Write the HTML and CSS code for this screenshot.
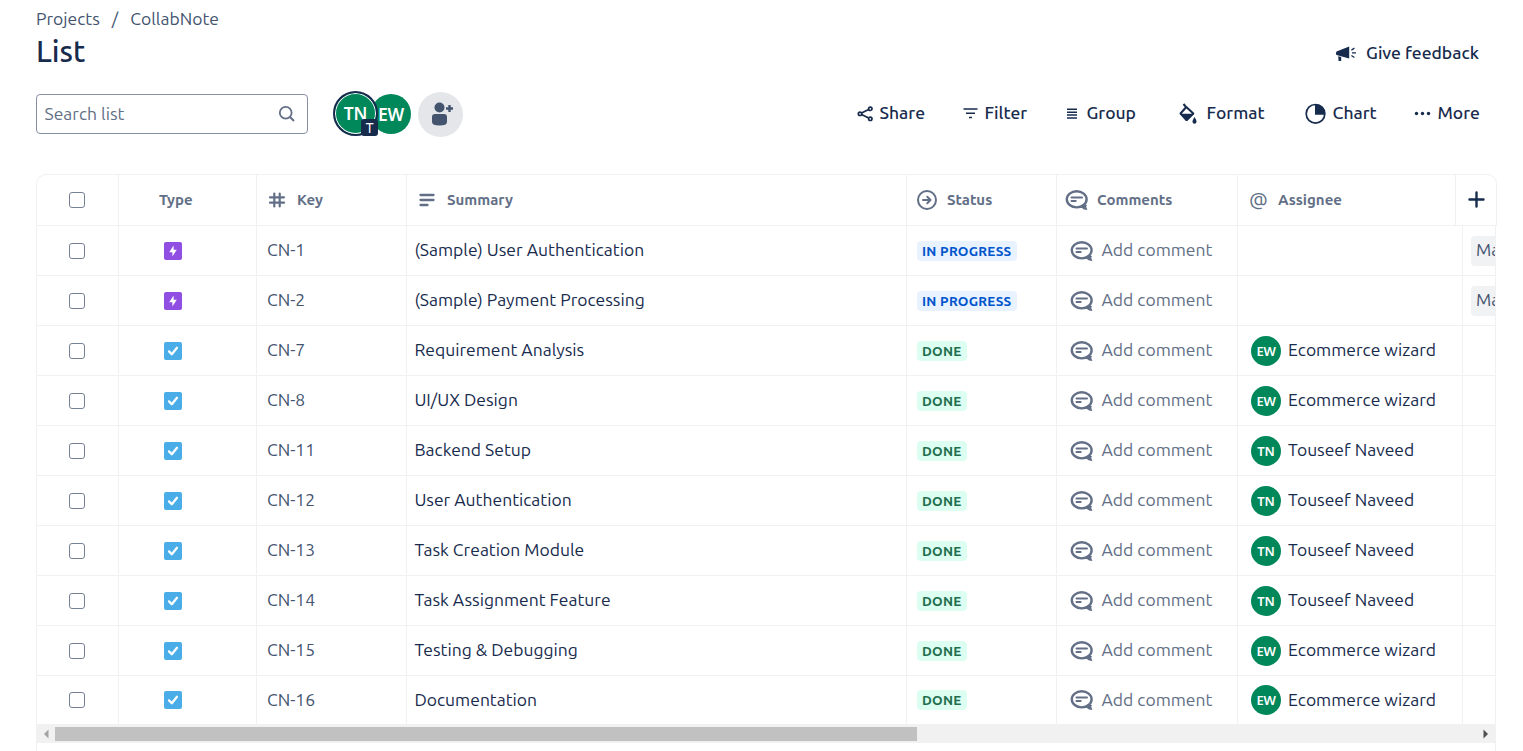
FILE: index.html
```html
<!DOCTYPE html>
<html lang="en">
<head>
<meta charset="utf-8">
<title>List - CollabNote</title>
<link rel="stylesheet" href="styles.css">
</head>
<body>
<svg class="defs" aria-hidden="true">
  <symbol id="bubble" viewBox="0 0 24 22"><ellipse cx="11.700" cy="10.300" rx="9.900" ry="8.100" fill="none" stroke="currentColor" stroke-width="2.400"/><path d="M14.500 18l3-2.500 4.500.5-.8 1.800 1.200 3.200q-4 0-5.500-2z" fill="currentColor"/><path d="M6.500 8.500h10.500M6.500 12h4.200" stroke="currentColor" stroke-width="2" stroke-linecap="round"/></symbol>
  <symbol id="epic" viewBox="0 0 18 18"><rect width="18" height="18" rx="2" fill="#904ee2"/><path d="M9.600 3.600v4.200h3.200l-4.400 6.600v-4.200H5.200z" fill="#fff"/></symbol>
  <symbol id="task" viewBox="0 0 18 18"><rect width="18" height="18" rx="2" fill="#4bade8"/><path d="M5 9.400l2.800 2.800L13 5.800" fill="none" stroke="#fff" stroke-width="2.300" stroke-linecap="round" stroke-linejoin="round"/></symbol>
</svg>
<nav class="crumbs"><span>Projects</span><span class="slash">/</span><span>CollabNote</span></nav>
<header class="title-row">
  <h1>List</h1>
  <button class="feedback"><svg width="22" height="18" viewBox="0 0 22 18"><path d="M14.200 2.500v12L1.500 11Q.2 9.500 1.500 7.400zM3.200 12.300l3 .8v3.800H3.600z" fill="currentColor"/><path d="M16.400 6.100l3-2M17 8.800h4M16.400 11.500l3 2" stroke="currentColor" stroke-width="1.300"/></svg><span>Give feedback</span></button>
</header>
<section class="toolbar">
  <div class="search"><span>Search list</span><svg width="18" height="18" viewBox="0 0 18 18"><circle cx="7.700" cy="7.700" r="5.900" fill="none" stroke="currentColor" stroke-width="1.800"/><path d="M12 12l4 4" stroke="currentColor" stroke-width="2"/></svg></div>
  <div class="people">
    <div class="avatar big selected"><span>TN</span><i class="badge">T</i></div>
    <div class="avatar big second">EW</div>
    <div class="add-person"><svg width="24" height="26" viewBox="0 0 24 26"><circle cx="9.500" cy="6.500" r="5" fill="currentColor"/><path d="M2 16q0-3 3-3h9q3 0 3 3v5q0 3.500-7.500 3.500T2 21z" fill="currentColor"/><path d="M19.500 4v7M16 7.500h7" stroke="currentColor" stroke-width="2.400"/></svg></div>
  </div>
  <div class="actions">
    <button class="a-share"><svg width="17" height="17" viewBox="0 0 17 17" fill="none" stroke="currentColor" stroke-width="1.700"><circle cx="3" cy="8.800" r="1.700"/><circle cx="13.300" cy="3.800" r="1.700"/><circle cx="13.300" cy="13.800" r="1.700"/><path d="M4.600 8l7-3.500M4.600 9.600l7 3.500"/></svg><span>Share</span></button>
    <button class="a-filter"><svg width="15" height="12" viewBox="0 0 15 12" stroke="currentColor" stroke-width="1.600"><path d="M.5 2h14M3 6.300h9M6 10.500h3"/></svg><span>Filter</span></button>
    <button class="a-group"><svg width="12" height="12" viewBox="0 0 12 12" stroke="currentColor" stroke-width="1.400"><path d="M1 2.200h10M1 5.200h10M1 8h10M1 11h10"/></svg><span>Group</span></button>
    <button class="a-format"><svg width="20" height="24" viewBox="0 0 20 24"><path d="M5.500 3l2.500 3M8.300 6L2.500 12.500 8.600 19l6.700-6.500z" fill="none" stroke="currentColor" stroke-width="2" stroke-linejoin="round"/><path d="M2 12.700h14L9.600 19.500q-1 .8-2 0z" fill="currentColor"/><path d="M16.500 16q2 3 2 4.700a2 2 0 0 1-4 0q0-1.700 2-4.700" fill="currentColor"/></svg><span>Format</span></button>
    <button class="a-chart"><svg width="21" height="21" viewBox="0 0 21 21"><circle cx="10.500" cy="10.800" r="9.300" fill="none" stroke="currentColor" stroke-width="1.700"/><path d="M10 1v10.700h10a9.600 9.600 0 0 0-10-10.700" fill="currentColor"/></svg><span>Chart</span></button>
    <button class="a-more"><svg width="17" height="6" viewBox="0 0 17 6" fill="currentColor"><circle cx="2.500" cy="3.500" r="1.700"/><circle cx="8.500" cy="3.500" r="1.700"/><circle cx="14.500" cy="3.500" r="1.700"/></svg><span>More</span></button>
  </div>
</section>
<main class="table">
  <div class="row head">
    <div class="check"><i></i></div>
    <div class="type"><span>Type</span></div>
    <div class="hkey"><svg width="18" height="18" viewBox="0 0 18 18" stroke="currentColor" stroke-width="2.200" stroke-linecap="round"><path d="M6.300 2.500v13M11.700 2.500v13M2 6.300h14M2 11.700h14"/></svg><span>Key</span></div>
    <div class="hsum"><svg width="18" height="18" viewBox="0 0 18 18" stroke="currentColor" stroke-width="2.300" stroke-linecap="round"><path d="M2.500 4h13M2.500 9h13M2.500 14h7"/></svg><span>Summary</span></div>
    <div class="hstat"><svg width="20" height="20" viewBox="0 0 20 20" fill="none" stroke="currentColor" stroke-width="2"><circle cx="10" cy="10" r="9"/><path d="M6 10h7M10.300 6.800L13.500 10l-3.200 3.200" stroke-linecap="round" stroke-linejoin="round"/></svg><span>Status</span></div>
    <div class="hcom"><svg width="24" height="22"><use href="#bubble"/></svg><span>Comments</span></div>
    <div class="hasg"><b class="at">@</b><span>Assignee</span></div>
    <div class="plus"><svg width="17" height="17" viewBox="0 0 17 17"><path d="M8.500 1.500v14M1.500 8.500h14" stroke="currentColor" stroke-width="2.400" stroke-linecap="round"/></svg></div>
  </div>
  <div class="body">
    <div class="row"><div class="check"><i></i></div><div class="type"><svg width="18" height="18"><use href="#epic"/></svg></div><div class="key"><span>CN-1</span></div><div class="sum"><span>(Sample) User Authentication</span></div><div class="stat"><span class="loz prog">IN PROGRESS</span></div><div class="com"><svg width="24" height="22"><use href="#bubble"/></svg><span>Add comment</span></div><div class="asg"></div><div class="tag"><span>Ma</span></div></div>
    <div class="row"><div class="check"><i></i></div><div class="type"><svg width="18" height="18"><use href="#epic"/></svg></div><div class="key"><span>CN-2</span></div><div class="sum"><span>(Sample) Payment Processing</span></div><div class="stat"><span class="loz prog">IN PROGRESS</span></div><div class="com"><svg width="24" height="22"><use href="#bubble"/></svg><span>Add comment</span></div><div class="asg"></div><div class="tag"><span>Ma</span></div></div>
    <div class="row"><div class="check"><i></i></div><div class="type"><svg width="18" height="18"><use href="#task"/></svg></div><div class="key"><span>CN-7</span></div><div class="sum"><span>Requirement Analysis</span></div><div class="stat"><span class="loz done">DONE</span></div><div class="com"><svg width="24" height="22"><use href="#bubble"/></svg><span>Add comment</span></div><div class="asg"><b class="avatar">EW</b><span>Ecommerce wizard</span></div><div class="tag"></div></div>
    <div class="row"><div class="check"><i></i></div><div class="type"><svg width="18" height="18"><use href="#task"/></svg></div><div class="key"><span>CN-8</span></div><div class="sum"><span>UI/UX Design</span></div><div class="stat"><span class="loz done">DONE</span></div><div class="com"><svg width="24" height="22"><use href="#bubble"/></svg><span>Add comment</span></div><div class="asg"><b class="avatar">EW</b><span>Ecommerce wizard</span></div><div class="tag"></div></div>
    <div class="row"><div class="check"><i></i></div><div class="type"><svg width="18" height="18"><use href="#task"/></svg></div><div class="key"><span>CN-11</span></div><div class="sum"><span>Backend Setup</span></div><div class="stat"><span class="loz done">DONE</span></div><div class="com"><svg width="24" height="22"><use href="#bubble"/></svg><span>Add comment</span></div><div class="asg"><b class="avatar">TN</b><span>Touseef Naveed</span></div><div class="tag"></div></div>
    <div class="row"><div class="check"><i></i></div><div class="type"><svg width="18" height="18"><use href="#task"/></svg></div><div class="key"><span>CN-12</span></div><div class="sum"><span>User Authentication</span></div><div class="stat"><span class="loz done">DONE</span></div><div class="com"><svg width="24" height="22"><use href="#bubble"/></svg><span>Add comment</span></div><div class="asg"><b class="avatar">TN</b><span>Touseef Naveed</span></div><div class="tag"></div></div>
    <div class="row"><div class="check"><i></i></div><div class="type"><svg width="18" height="18"><use href="#task"/></svg></div><div class="key"><span>CN-13</span></div><div class="sum"><span>Task Creation Module</span></div><div class="stat"><span class="loz done">DONE</span></div><div class="com"><svg width="24" height="22"><use href="#bubble"/></svg><span>Add comment</span></div><div class="asg"><b class="avatar">TN</b><span>Touseef Naveed</span></div><div class="tag"></div></div>
    <div class="row"><div class="check"><i></i></div><div class="type"><svg width="18" height="18"><use href="#task"/></svg></div><div class="key"><span>CN-14</span></div><div class="sum"><span>Task Assignment Feature</span></div><div class="stat"><span class="loz done">DONE</span></div><div class="com"><svg width="24" height="22"><use href="#bubble"/></svg><span>Add comment</span></div><div class="asg"><b class="avatar">TN</b><span>Touseef Naveed</span></div><div class="tag"></div></div>
    <div class="row"><div class="check"><i></i></div><div class="type"><svg width="18" height="18"><use href="#task"/></svg></div><div class="key"><span>CN-15</span></div><div class="sum"><span>Testing &amp; Debugging</span></div><div class="stat"><span class="loz done">DONE</span></div><div class="com"><svg width="24" height="22"><use href="#bubble"/></svg><span>Add comment</span></div><div class="asg"><b class="avatar">EW</b><span>Ecommerce wizard</span></div><div class="tag"></div></div>
    <div class="row last"><div class="check"><i></i></div><div class="type"><svg width="18" height="18"><use href="#task"/></svg></div><div class="key"><span>CN-16</span></div><div class="sum"><span>Documentation</span></div><div class="stat"><span class="loz done">DONE</span></div><div class="com"><svg width="24" height="22"><use href="#bubble"/></svg><span>Add comment</span></div><div class="asg"><b class="avatar">EW</b><span>Ecommerce wizard</span></div><div class="tag"></div></div>
    <div class="scrollbar"><svg width="18" height="18" viewBox="0 0 18 18"><path d="M11.500 4.500v9L7 9z" fill="#a3a3a3"/></svg><div class="thumb"></div><svg width="18" height="18" viewBox="0 0 18 18"><path d="M6.500 4.500v9L11 9z" fill="#505050"/></svg></div>
    <div class="below"></div>
  </div>
</main>
</body>
</html>
```
FILE: styles.css
```css
* { box-sizing: border-box; }
html, body { height: 100%; overflow: hidden; }
body { margin: 0; background: #fff; color: #172b4d; font: 400 17.500px/24px Ubuntu, "Open Sans", "Noto Sans", sans-serif; white-space: nowrap; }
svg { display: block; flex: none; }
.defs { position: absolute; width: 0; height: 0; }
button { display: flex; align-items: center; border: 0; padding: 0; background: none; color: #172b4d; font: inherit; font-weight: 500; height: 24px; }
.crumbs { display: flex; padding: 7px 0 0 36px; height: 31px; color: #44546f; }
.slash { margin: 0 12px; }
.title-row { display: flex; justify-content: space-between; padding: 0 44px 0 36px; height: 50px; }
h1 { margin: 4px 0 0; font-size: 30px; line-height: 32px; font-weight: 500; }
.feedback { margin-top: 10px; gap: 9px; }
.toolbar { display: flex; height: 93px; padding: 13px 44px 0 36px; align-items: flex-start; }
.search { display: flex; align-items: center; justify-content: space-between; width: 272px; height: 40px; border: 1px solid #8590a2; border-radius: 4px; padding: 0 11px 0 7.500px; color: #626f86; }
.people { display: flex; margin: -3px 0 0 25px; }
.avatar { display: flex; align-items: center; justify-content: center; flex: none; width: 30px; height: 30px; border-radius: 50%; background: #00875a; color: #fff; font: 600 13px/20px "Noto Sans", "Open Sans", sans-serif; letter-spacing: -.200px; }
.avatar.big { width: 40px; height: 40px; padding-bottom: 1px; font-size: 17.500px; margin-top: 3px; }
.avatar.big.selected { position: relative; z-index: 1; width: 45px; height: 45px; padding-bottom: 1px; border: 2px solid #172b4d; box-shadow: inset 0 0 0 1px #fff; margin: 0; }
.avatar.second { margin-left: -7px; }
.badge { position: absolute; right: -2px; bottom: -2px; width: 17px; height: 17px; border-radius: 3px; background: #172b4d; font: 400 14px/17px "Noto Sans", sans-serif; text-align: center; }
.add-person { display: flex; align-items: center; justify-content: center; width: 45px; height: 45px; margin: 1px 0 0 7px; border-radius: 50%; background: #e4e6ea; color: #44546f; }
.add-person svg { margin: 0 -2px 2px 0; }
.actions { display: flex; flex: 1; justify-content: flex-end; margin-top: 7px; }
.actions svg { margin-right: 7px; }
.actions button { justify-content: flex-start; }
.a-share { width: 106px; }
.a-filter { width: 103px; }
.a-group { width: 112px; }
.a-format { width: 127px; }
.a-chart { width: 109px; }
.a-more { width: 65.500px; }
.a-share svg { margin-right: 6px; }
.a-group svg, .a-format svg { margin-right: 9px; }
.row { display: grid; grid-template-columns: 82px 138px 150px 500px 150px 181px 225px 1fr; height: 50px; border-bottom: 1px solid #f0f1f2; }
.row > div { display: flex; align-items: center; border-right: 1px solid #f0f1f2; min-width: 0; overflow: hidden; }
.row > div:last-child { border-right: 0; }
.table { padding-left: 36px; }
.head { width: 1461px; height: 52px; border: 1px solid #f0f1f2; border-radius: 10px 10px 0 0; grid-template-columns: 82px 138px 150px 500px 150px 181px 218px 1fr; color: #626f86; font-size: 15px; font-weight: 600; }
.body { width: 1460px; border: solid #f0f1f2; border-width: 0 1px; }
.check { justify-content: center; }
.check i { width: 16px; height: 16px; margin-right: 1px; border: 1px solid #758195; border-radius: 3px; }
.type { padding-left: 45px; }
.head .type { padding-left: 40px; }
.key { padding-left: 10px; color: #44546f; }
.sum { padding-left: 7.400px; }
.key span, .sum span, .com span, .asg span { margin-bottom: 2px; }
.stat { padding-left: 10px; }
.com { padding-left: 13px; color: #626f86; }
.com span { margin-left: 7.500px; }
.asg { padding-left: 13px; }
.asg span { margin-left: 7px; }
.tag { padding-left: 8px; }
.tag span { height: 30px; padding: 2px 5px; border-radius: 4px; background: #f1f2f4; color: #44546f; }
.hkey { padding-left: 11px; } .hkey span { margin-left: 11px; }
.hsum { padding-left: 11px; } .hsum span { margin-left: 11px; }
.hstat { padding-left: 10px; } .hstat span { margin-left: 10px; }
.hcom { padding-left: 8px; } .hcom span { margin-left: 8px; }
.hasg { padding-left: 11px; } .hasg span { margin-left: 10px; }
.at { font-size: 20px; font-weight: 400; width: 19px; }
.plus { justify-content: center; color: #172b4d; }
.plus svg { margin-bottom: 2px; }
.loz { height: 20px; line-height: 20px; padding: 0 5px; border-radius: 4px; font-size: 13.500px; font-weight: 700; letter-spacing: .25px; }
.prog { width: 100px; background: #e9f2ff; color: #0055cc; }
.done { width: 50px; background: #dcfff1; color: #216e4e; }
.row.last { height: 48px; border-bottom: 0; }
.row.last .key span, .row.last .sum span, .row.last .com span, .row.last .asg span { margin-bottom: 1px; }
.scrollbar { display: flex; align-items: center; justify-content: space-between; height: 19px; background: #f1f1f1; }
.thumb { width: 862px; height: 14px; margin-right: auto; background: #c1c1c1; }
.below { height: 9px; }
```
